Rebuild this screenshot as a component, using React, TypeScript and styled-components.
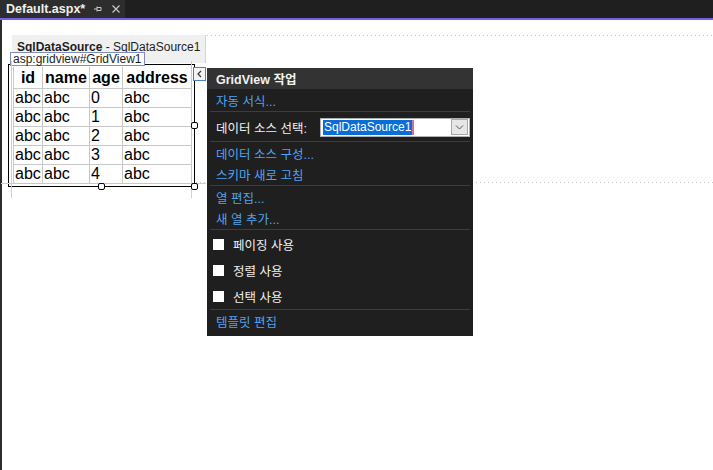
import styled, { createGlobalStyle } from 'styled-components';

const GlobalStyle = createGlobalStyle`
    html, body {
        margin: 0;
        padding: 0;
        background: #ffffff;
    }
`;

const UI_FONT = `"Liberation Sans", "Noto Sans CJK KR", sans-serif`;

const COLUMNS = [
    { title: 'id', width: 29 },
    { title: 'name', width: 47 },
    { title: 'age', width: 33 },
    { title: 'address', width: 69 },
];

const ROWS = [0, 1, 2, 3, 4];

const HANDLES = [
    { left: 182, top: 57 },
    { left: 89, top: 118 },
    { left: 182, top: 118 },
];

const App = () => {
    return <Window>
        <GlobalStyle />
        <TabBar>
            <Tab>
                <TabTitle>Default.aspx*</TabTitle>
                <TabIcon viewBox="0 0 10 10">
                    <path d="M1 5h3M4 2.5v5M4 3.5h4v3H4" fill="none" stroke="#c8c8c8" strokeWidth="1" />
                </TabIcon>
                <TabIcon viewBox="0 0 10 10">
                    <path d="M1.5 1.5l7 7M8.5 1.5l-7 7" fill="none" stroke="#c8c8c8" strokeWidth="1.2" />
                </TabIcon>
            </Tab>
        </TabBar>
        <AccentLine />
        <Body>
            <LeftEdge />
            <Canvas>
                <TopRow>
                    <DataSourceBox>
                        <strong>SqlDataSource</strong> - SqlDataSource1
                    </DataSourceBox>
                    <DottedGuide />
                </TopRow>
                <GridRow>
                    <GridWrap>
                        <ControlTag>asp:gridview#GridView1</ControlTag>
                        <GuideV style={{ left: 2 }} />
                        <GuideV style={{ left: 182 }} />
                        <GuideH />
                        <Grid>
                            <colgroup>
                                {COLUMNS.map(c => <col key={c.title} style={{ width: c.width }} />)}
                            </colgroup>
                            <thead>
                                <tr>
                                    {COLUMNS.map(c => <HeadCell key={c.title}>{c.title}</HeadCell>)}
                                </tr>
                            </thead>
                            <tbody>
                                {ROWS.map(n => <tr key={n}>
                                    <Cell>abc</Cell>
                                    <Cell>abc</Cell>
                                    <Cell>{n}</Cell>
                                    <Cell>abc</Cell>
                                </tr>)}
                            </tbody>
                        </Grid>
                        {HANDLES.map((h, i) => <Handle key={i} style={{ left: h.left, top: h.top }} />)}
                        <SmartTagButton>
                            <svg width="7" height="8" viewBox="0 0 7 8">
                                <path d="M5 1L2 4l3 3" fill="none" stroke="#333" strokeWidth="1.2" />
                            </svg>
                        </SmartTagButton>
                    </GridWrap>
                    <BottomGuideCell>
                        <DottedGuide />
                    </BottomGuideCell>
                </GridRow>

                <TaskMenu>
                    <MenuHeader>GridView 작업</MenuHeader>
                    <MenuBody>
                        <MenuLink>자동 서식...</MenuLink>
                        <Separator />
                        <SelectRow>
                            <MenuLabel>데이터 소스 선택:</MenuLabel>
                            <SelectBox>
                                <Selected>SqlDataSource1</Selected>
                                <DropButton>
                                    <svg width="9" height="6" viewBox="0 0 9 6">
                                        <path d="M1 1.5l3.5 3.5L8 1.5" fill="none" stroke="#555" strokeWidth="1" />
                                    </svg>
                                </DropButton>
                            </SelectBox>
                        </SelectRow>
                        <Separator />
                        <MenuLink>데이터 소스 구성...</MenuLink>
                        <MenuLink>스키마 새로 고침</MenuLink>
                        <Separator />
                        <MenuLink>열 편집...</MenuLink>
                        <MenuLink>새 열 추가...</MenuLink>
                        <Separator />
                        <CheckRow><CheckBox />페이징 사용</CheckRow>
                        <CheckRow><CheckBox />정렬 사용</CheckRow>
                        <CheckRow><CheckBox />선택 사용</CheckRow>
                        <Separator />
                        <MenuLink>템플릿 편집</MenuLink>
                    </MenuBody>
                </TaskMenu>
            </Canvas>
        </Body>
    </Window>;
};

const Window = styled.div`
    width: 713px;
    height: 470px;
    display: flex;
    flex-direction: column;
    overflow: hidden;
    font-family: ${UI_FONT};
`;

const TabBar = styled.div`
    height: 18px;
    background: #1f1f1f;
    display: flex;
`;

const Tab = styled.div`
    width: 125px;
    background: #2d2d2d;
    display: flex;
    align-items: center;
    padding-left: 6px;
    box-sizing: border-box;
`;

const TabTitle = styled.span`
    color: #f0f0f0;
    font-weight: bold;
    font-size: 12.5px;
`;

const TabIcon = styled.svg`
    width: 10px;
    height: 10px;
    margin-left: 8px;
`;

const AccentLine = styled.div`
    height: 2px;
    background: #7160e8;
`;

const Body = styled.div`
    flex: 1;
    display: flex;
`;

const LeftEdge = styled.div`
    width: 2px;
    background: #2b2b2b;
`;

const Canvas = styled.div`
    flex: 1;
    position: relative;
    background: #ffffff;
    padding: 15px 0 0 6px;
`;

const TopRow = styled.div`
    display: flex;
    align-items: flex-start;
`;

const DataSourceBox = styled.div`
    width: 194px;
    height: 28px;
    margin-left: 4px;
    background: #f0f0f0;
    border-right: 1px solid #d4d4d4;
    font-size: 12px;
    color: #1e1e1e;
    padding: 5px 0 0 5px;
    box-sizing: border-box;
    white-space: nowrap;
    overflow: hidden;
`;

const DottedGuide = styled.div`
    flex: 1;
    height: 1px;
    margin-left: 1px;
    background: repeating-linear-gradient(to right, #c4c4c4 0 1px, transparent 1px 4px);
`;

const GridRow = styled.div`
    display: flex;
    align-items: flex-start;
    margin-top: 1px;
`;

const BottomGuideCell = styled.div`
    flex: 1;
    height: 119px;
    display: flex;
    align-items: flex-end;
`;

const GridWrap = styled.div`
    position: relative;
    border: 1px solid #000;
    padding: 2px 2px 2px 4px;
`;

const ControlTag = styled.div`
    position: absolute;
    left: 1px;
    top: -13px;
    height: 12px;
    padding: 0 2px;
    background: #ffffff;
    border: 1px solid #7f8cc4;
    font-size: 12px;
    line-height: 12px;
    color: #1e1e1e;
    white-space: nowrap;
`;

const GuideV = styled.div`
    position: absolute;
    top: -4px;
    bottom: -12px;
    width: 1px;
    background: #e2c4c4;
`;

const GuideH = styled.div`
    position: absolute;
    left: -8px;
    right: -12px;
    top: 118px;
    height: 1px;
    background: #e2c4c4;
`;

const Grid = styled.table`
    position: relative;
    border-collapse: collapse;
    table-layout: fixed;
    width: 178px;
    font-family: "Liberation Sans", Arial, sans-serif;
    font-size: 16px;
    color: #000;
`;

const HeadCell = styled.th`
    border: 1px solid #c8c8c8;
    border-top: none;
    height: 21px;
    padding: 0 1px;
    font-weight: bold;
    text-align: center;
    white-space: nowrap;
`;

const Cell = styled.td`
    border: 1px solid #c8c8c8;
    height: 18px;
    padding: 0 1px;
    line-height: 18px;
    white-space: nowrap;
`;

const Handle = styled.div`
    position: absolute;
    width: 5px;
    height: 5px;
    border: 1px solid #000;
    border-radius: 2px;
    background: #fff;
`;

const SmartTagButton = styled.div`
    position: absolute;
    left: 184px;
    top: 2px;
    width: 11px;
    height: 12px;
    border: 1px solid #4a7fc0;
    background: #f4f4f4;
    display: flex;
    align-items: center;
    justify-content: center;
`;

const TaskMenu = styled.div`
    position: absolute;
    left: 205px;
    top: 48px;
    width: 266px;
    background: #1f1f1f;
    font-family: ${UI_FONT};
    font-size: 12.5px;
`;

const MenuHeader = styled.div`
    height: 21px;
    background: #333333;
    color: #f2f2f2;
    font-weight: bold;
    display: flex;
    align-items: center;
    padding-left: 9px;
`;

const MenuBody = styled.div`
    padding: 1px 3px 4px 3px;
`;

const MenuLink = styled.div`
    height: 21px;
    display: flex;
    align-items: center;
    padding-left: 6px;
    color: #4fa3f0;
`;

const Separator = styled.div`
    height: 1px;
    background: #3d3d3d;
    margin-bottom: 1px;
`;

const SelectRow = styled.div`
    height: 28px;
    display: flex;
    align-items: center;
    padding-left: 6px;
`;

const MenuLabel = styled.span`
    color: #f0f0f0;
    width: 104px;
`;

const SelectBox = styled.div`
    flex: 1;
    height: 17px;
    background: #fff;
    border: 1px solid #b0b0b0;
    display: flex;
    align-items: center;
    padding: 0 1px 0 2px;
`;

const Selected = styled.span`
    background: #0a6cd6;
    color: #fff;
    font-size: 12px;
    line-height: 15px;
    padding: 0 1px;
    border-right: 2px solid #d070a0;
`;

const DropButton = styled.div`
    margin-left: auto;
    width: 15px;
    height: 14px;
    background: #e6e6e6;
    border: 1px solid #a8a8a8;
    display: flex;
    align-items: center;
    justify-content: center;
`;

const CheckRow = styled.div`
    height: 26px;
    display: flex;
    align-items: center;
    padding-left: 3px;
    color: #f0f0f0;
`;

const CheckBox = styled.span`
    width: 11px;
    height: 11px;
    background: #fff;
    margin-right: 9px;
`;

export default App;
